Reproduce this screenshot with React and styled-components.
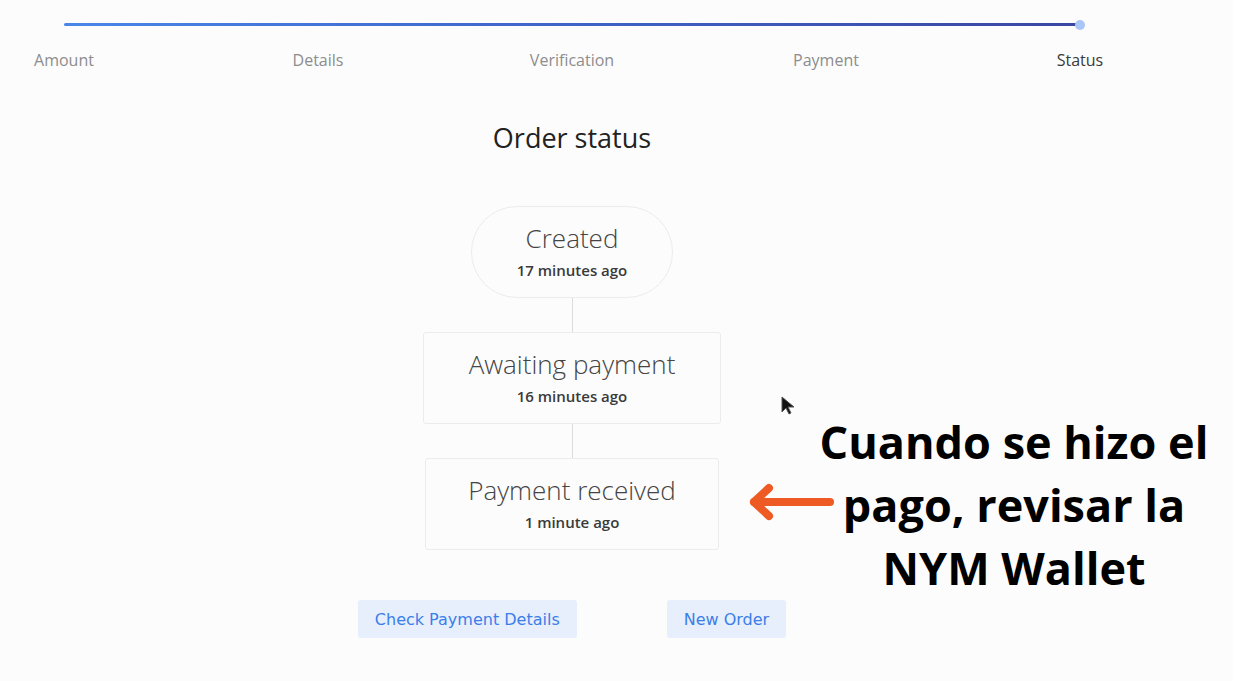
import React from 'react';
import styled, { createGlobalStyle } from 'styled-components';

const GlobalStyle = createGlobalStyle`
  html, body {
    margin: 0;
    padding: 0;
    background: #fcfcfc;
    overflow: hidden;
  }
  body {
    font-family: "Open Sans", "DejaVu Sans", sans-serif;
  }
`;

const Page = styled.div`
  position: relative;
  width: 1233px;
  height: 681px;
`;

const Content = styled.div`
  width: 1144px;
  display: flex;
  flex-direction: column;
  align-items: center;
`;

const Stepper = styled.div`
  align-self: stretch;
  padding-top: 23px;
`;

const Track = styled.div`
  position: relative;
  margin-left: 64px;
  width: 1016px;
  height: 3px;
  border-radius: 2px;
  background: linear-gradient(90deg, #4a86e8 0%, #3f63c7 50%, #3a47a3 100%);
`;

// end dot of the progress bar
const TrackDot = styled.span`
  position: absolute;
  right: -5px;
  top: -3px;
  width: 10px;
  height: 10px;
  border-radius: 50%;
  background: #a9c6f6;
`;

const Labels = styled.div`
  display: grid;
  grid-template-columns: repeat(5, 254px);
  margin-left: -63px;
  margin-top: 23px;
`;

const StepLabel = styled.div`
  text-align: center;
  font-family: "Open Sans", sans-serif;
  font-size: 16px;
  line-height: 22px;
  color: ${(p) => (p.active ? '#3a3a3a' : '#8d8d8d')};
`;

const Title = styled.h2`
  margin: 51px 0 0;
  font-family: "Open Sans", sans-serif;
  font-weight: 400;
  font-size: 27px;
  line-height: 32px;
  color: #222;
`;

const Flow = styled.div`
  margin-top: 52px;
  display: flex;
  flex-direction: column;
  align-items: center;
`;

const Node = styled.div`
  width: ${(p) => p.w}px;
  height: 92px;
  box-sizing: border-box;
  border: 1px solid #ececec;
  border-radius: ${(p) => (p.pill ? '46px' : '3px')};
  display: flex;
  flex-direction: column;
  align-items: center;
  justify-content: center;
  gap: 9px;
  padding-bottom: 2px;
`;

const NodeTitle = styled.div`
  font-family: "Open Sans", sans-serif;
  font-weight: 300;
  font-size: 26px;
  line-height: 28px;
  color: #444;
`;

const NodeTime = styled.div`
  font-family: "Open Sans", sans-serif;
  font-weight: 600;
  font-size: 15px;
  line-height: 18px;
  color: #3a3a3a;
`;

const Connector = styled.div`
  width: 1px;
  height: 34px;
  background: #dcdcdc;
`;

const Actions = styled.div`
  margin-top: 50px;
  display: flex;
  gap: 90px;
`;

const Button = styled.button`
  height: 38px;
  padding: 0 17px;
  border: none;
  border-radius: 3px;
  background: #e7effc;
  color: #3b7eea;
  font-family: "DejaVu Sans", sans-serif;
  font-size: 16px;
  cursor: pointer;
`;

const Note = styled.div`
  position: absolute;
  left: 794px;
  top: 410px;
  width: 440px;
  text-align: center;
  font-family: "Open Sans", sans-serif;
  font-weight: 700;
  font-size: 45px;
  line-height: 63px;
  color: #000;
`;

const NoteArrow = styled.svg`
  position: absolute;
  left: 746px;
  top: 482px;
`;

const Cursor = styled.svg`
  position: absolute;
  left: 780px;
  top: 396px;
`;

const steps = ['Amount', 'Details', 'Verification', 'Payment', 'Status'];

const events = [
  { title: 'Created', time: '17 minutes ago', w: 202, pill: true },
  { title: 'Awaiting payment', time: '16 minutes ago', w: 298 },
  { title: 'Payment received', time: '1 minute ago', w: 294 },
];

export default function App() {
  return (
    <Page>
      <GlobalStyle />
      <Content>
        <Stepper>
          <Track>
            <TrackDot />
          </Track>
          <Labels>
            {steps.map((s, i) => (
              <StepLabel key={s} active={i === steps.length - 1}>{s}</StepLabel>
            ))}
          </Labels>
        </Stepper>

        <Title>Order status</Title>

        <Flow>
          {events.map((e, i) => (
            <React.Fragment key={e.title}>
              {i > 0 && <Connector />}
              <Node w={e.w} pill={e.pill}>
                <NodeTitle>{e.title}</NodeTitle>
                <NodeTime>{e.time}</NodeTime>
              </Node>
            </React.Fragment>
          ))}
        </Flow>

        <Actions>
          <Button>Check Payment Details</Button>
          <Button>New Order</Button>
        </Actions>
      </Content>

      <Cursor width="16" height="20" viewBox="0 0 16 20">
        <path d="M2 1 L2 16 L6 12 L9 18 L11 17 L8 11 L14 11 Z" fill="#111" stroke="#555" strokeWidth="1" />
      </Cursor>

      <NoteArrow width="92" height="40" viewBox="0 0 92 40">
        <g fill="none" stroke="#ee5a24" strokeWidth="8" strokeLinecap="round" strokeLinejoin="round">
          <path d="M84 20 H8" />
          <path d="M23 6 L8 20 L23 34" />
        </g>
      </NoteArrow>

      <Note>
        Cuando se hizo el
        <br />
        pago, revisar la
        <br />
        NYM Wallet
      </Note>
    </Page>
  );
}
